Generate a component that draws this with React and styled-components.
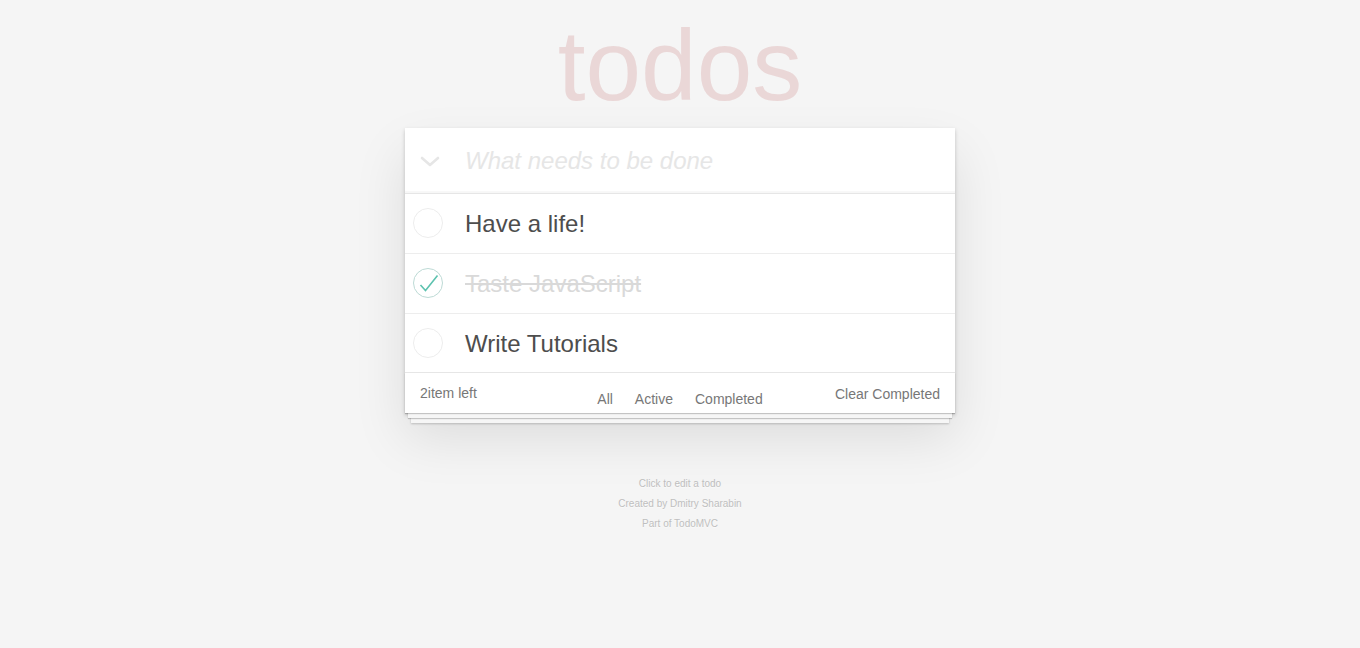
import React from 'react';
import styled, { createGlobalStyle } from 'styled-components';

const GlobalStyle = createGlobalStyle`
  html, body {
    margin: 0;
    padding: 0;
  }
  body {
    background: #f5f5f5;
    color: #4d4d4d;
    font-family: "Liberation Sans", Arial, Helvetica, sans-serif;
    font-weight: 300;
    -webkit-font-smoothing: antialiased;
  }
`;

const Page = styled.div`
  width: 550px;
  margin: 0 auto;
  padding-top: 15px;
`;

const Title = styled.h1`
  margin: 0 0 13px;
  height: 100px;
  font-size: 100px;
  line-height: 100px;
  font-weight: 100;
  text-align: center;
  color: rgba(175, 47, 47, 0.15);
  text-rendering: optimizeLegibility;
`;

const TodoApp = styled.section`
  background: #fff;
  position: relative;
  box-shadow: 0 2px 4px 0 rgba(0, 0, 0, 0.2), 0 25px 50px 0 rgba(0, 0, 0, 0.1);
`;

const Header = styled.header`
  display: flex;
  align-items: center;
  height: 65px;
  box-shadow: inset 0 -2px 1px rgba(0, 0, 0, 0.03);
`;

const ToggleAll = styled.button`
  width: 48px;
  height: 65px;
  flex: none;
  display: flex;
  align-items: center;
  justify-content: center;
  border: none;
  background: none;
  padding: 2px 0 0 2px;
  cursor: pointer;
`;

const NewTodo = styled.input`
  flex: 1;
  min-width: 0;
  height: 65px;
  box-sizing: border-box;
  border: none;
  outline: none;
  background: transparent;
  padding: 16px 16px 16px 12px;
  font-family: inherit;
  font-size: 24px;
  color: #4d4d4d;

  &::placeholder {
    font-style: italic;
    font-weight: 300;
    color: #e6e6e6;
  }
`;

const Main = styled.section`
  border-top: 1px solid #e6e6e6;
`;

const List = styled.ul`
  margin: 0;
  padding: 0;
  list-style: none;
`;

const Item = styled.li`
  display: flex;
  align-items: center;
  font-size: 24px;
  border-bottom: 1px solid #ededed;

  &:last-child {
    border-bottom: none;
  }
`;

const Check = styled.svg`
  width: 30px;
  height: 30px;
  flex: none;
  margin-left: 8px;
`;

const Label = styled.label`
  flex: 1;
  padding: 16px 15px 14px 22px;
  line-height: 1.2;
  word-break: break-all;
  color: ${props => (props.done ? '#d9d9d9' : '#4d4d4d')};
  text-decoration: ${props => (props.done ? 'line-through' : 'none')};
  transition: color 0.4s;
`;

const Footer = styled.footer`
  position: relative;
  display: grid;
  grid-template-columns: 1fr auto 1fr;
  height: 40px;
  padding: 0 15px;
  border-top: 1px solid #e6e6e6;
  color: #777;
  font-size: 14px;

  &::before {
    content: '';
    position: absolute;
    right: 0;
    bottom: 0;
    left: 0;
    height: 40px;
    overflow: hidden;
    box-shadow: 0 1px 1px rgba(0, 0, 0, 0.2),
      0 8px 0 -3px #f6f6f6,
      0 9px 1px -3px rgba(0, 0, 0, 0.2),
      0 16px 0 -6px #f6f6f6,
      0 17px 2px -6px rgba(0, 0, 0, 0.2);
  }
`;

const Count = styled.span`
  position: relative;
  line-height: 20px;
  padding-top: 10px;
`;

const Filters = styled.ul`
  position: relative;
  display: flex;
  margin: 0;
  padding: 15px 0 0;
  list-style: none;
  line-height: 20px;
`;

const FilterLink = styled.a`
  display: block;
  margin: 0 3px;
  padding: 0 7px;
  border: 1px solid transparent;
  border-radius: 3px;
  color: inherit;
  text-decoration: none;
  cursor: pointer;
`;

const ClearButton = styled.button`
  position: relative;
  justify-self: end;
  align-self: start;
  margin: 0;
  padding: 11px 0 0;
  border: none;
  background: none;
  font-family: inherit;
  font-size: 14px;
  line-height: 20px;
  color: #777;
  cursor: pointer;
`;

const Info = styled.footer`
  margin-top: 61px;
  text-align: center;
  font-size: 10px;
  color: #bfbfbf;
  text-shadow: 0 1px 0 rgba(255, 255, 255, 0.5);

  p {
    margin: 0;
    line-height: 20px;
  }
`;

const todos = [
  { id: 1, title: 'Have a life!', completed: false },
  { id: 2, title: 'Taste JavaScript', completed: true },
  { id: 3, title: 'Write Tutorials', completed: false },
];

const Chevron = () => (
  <svg width='20' height='12' viewBox='0 0 20 12'>
    <polyline
      points='2,2 10,9 18,2'
      fill='none'
      stroke='#e6e6e6'
      strokeWidth='2.6'
      strokeLinecap='round'
      strokeLinejoin='round'
    />
  </svg>
);

const Toggle = ({ done }) => (
  <Check viewBox='0 0 30 30'>
    <circle
      cx='15'
      cy='15'
      r='14.5'
      fill='none'
      stroke={done ? '#bddad5' : '#ededed'}
      strokeWidth='1'
    />
    {done && (
      <polyline
        points='7.5,17 12.5,22.5 24.5,7.5'
        fill='none'
        stroke='#5dc2af'
        strokeWidth='1.6'
      />
    )}
  </Check>
);

const App = () => {
  const left = todos.filter(t => !t.completed).length;
  return (
    <>
      <GlobalStyle />
      <Page>
        <Title>todos</Title>
        <TodoApp>
          <Header>
            <ToggleAll aria-label='Mark all as complete'>
              <Chevron />
            </ToggleAll>
            <NewTodo placeholder='What needs to be done' />
          </Header>
          <Main>
            <List>
              {todos.map(todo => (
                <Item key={todo.id}>
                  <Toggle done={todo.completed} />
                  <Label done={todo.completed}>{todo.title}</Label>
                </Item>
              ))}
            </List>
          </Main>
          <Footer>
            <Count>{left}item left</Count>
            <Filters>
              <li><FilterLink>All</FilterLink></li>
              <li><FilterLink>Active</FilterLink></li>
              <li><FilterLink>Completed</FilterLink></li>
            </Filters>
            <ClearButton>Clear Completed</ClearButton>
          </Footer>
        </TodoApp>
        <Info>
          <p>Click to edit a todo</p>
          <p>Created by Dmitry Sharabin</p>
          <p>Part of TodoMVC</p>
        </Info>
      </Page>
    </>
  );
};

export default App;
